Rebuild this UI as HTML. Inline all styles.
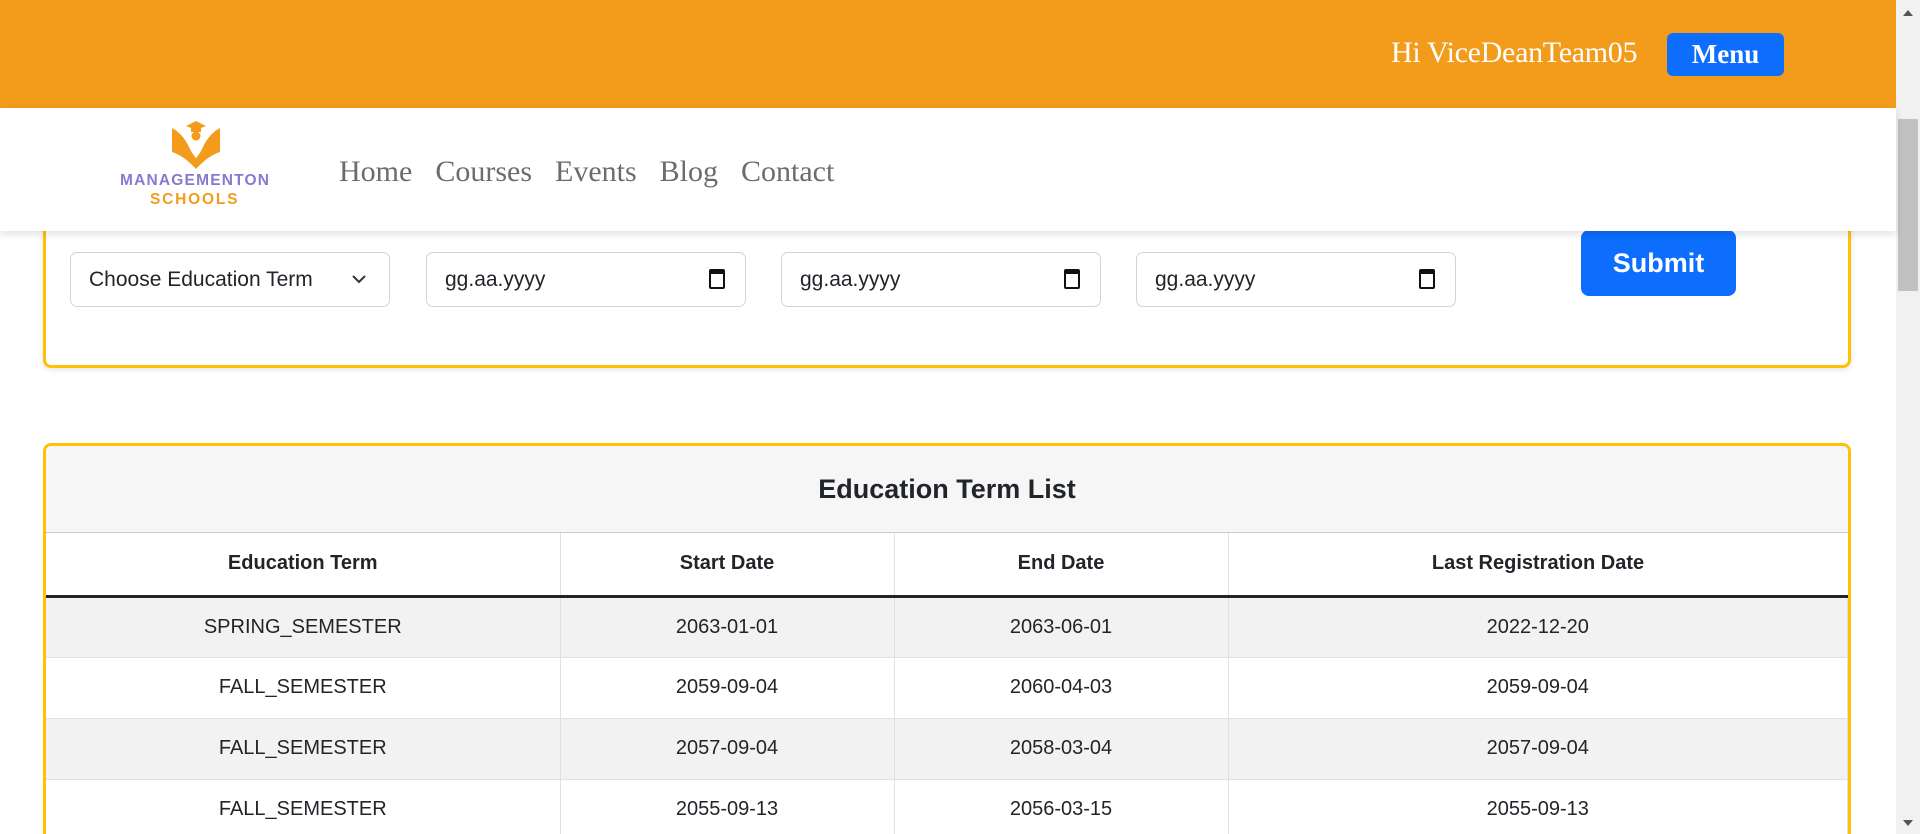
<!DOCTYPE html>
<html><head><meta charset="utf-8"><style>
*{box-sizing:border-box;margin:0;padding:0}
html{width:1920px;height:834px;overflow:hidden}
body{width:1920px;height:834px;overflow:hidden;background:#fff;font-family:"Liberation Sans",sans-serif;position:relative;color:#212529}
.abs{position:absolute}
.top{left:0;top:0;width:1896px;height:108px;background:#f39c1c}
.hi{left:1391px;top:36px;font-family:"Liberation Serif",serif;font-size:30px;color:#fff;letter-spacing:-0.3px}
.menu{left:1667px;top:33px;width:117px;height:43px;background:#0d6efd;border-radius:6px;color:#fff;font-family:"Liberation Serif",serif;font-weight:bold;font-size:27px;text-align:center;line-height:43px}
.nav{left:0;top:108px;width:1896px;height:123px;background:#fff;box-shadow:0 3px 8px rgba(0,0,0,.12);z-index:5}
.links{left:339px;top:47px;font-family:"Liberation Serif",serif;font-size:30px;color:#6c6c6c;white-space:nowrap}
.links span{margin-right:23px}
.card1{left:43px;top:150px;width:1808px;height:218px;border:3px solid #ffc107;border-radius:8px;box-shadow:0 2px 6px rgba(0,0,0,.1)}
.inp{height:55px;border:1px solid #ced4da;border-radius:7px;background:#fff;font-size:21px;line-height:53px;padding-left:18px;color:#212529}
.cal{position:absolute;right:20px;top:16px;width:16px;height:20px;border:2.5px solid #111;border-top-width:5px;border-radius:2px}
.lbl{font-size:21px;color:#212529}
.submit{left:1581px;top:230px;width:155px;height:66px;background:#0d6efd;border-radius:8px;color:#fff;font-weight:bold;font-size:27px;text-align:center;line-height:66px}
.card2{left:43px;top:443px;width:1808px;height:391px;border:3px solid #ffc107;border-bottom:none;border-radius:8px 8px 0 0;overflow:hidden}
.th{position:absolute;left:0;top:0;width:100%;height:87px;background:#f6f6f6;border-bottom:1px solid #ccc;text-align:center;font-weight:bold;font-size:27px;line-height:87px}
table{position:absolute;left:0;top:87px;width:1802px;border-collapse:collapse;font-size:20px}
td,th{text-align:center;border-right:1px solid #dee2e6;border-bottom:1px solid #dee2e6;height:61px}
th{height:63px;font-weight:bold;border-bottom:3px solid #212529}
tr.g td{background:#f2f2f2}
.sb{left:1896px;top:0;width:24px;height:834px;background:#f1f1f1}
.thumb{left:1898px;top:119px;width:20px;height:172px;background:#c1c1c1}
</style></head><body>
<div class="abs top"></div>
<div class="abs hi">Hi ViceDeanTeam05</div>
<div class="abs menu">Menu</div>

<div class="abs card1"></div>
<div class="abs lbl" style="left:426px;top:204px">Start Date</div>
<div class="abs lbl" style="left:781px;top:204px">End Date</div>
<div class="abs lbl" style="left:1136px;top:204px">Last Registration Date</div>
<div class="abs inp" style="left:70px;top:252px;width:320px">Choose Education Term<svg style="position:absolute;right:22px;top:20px" width="16" height="12" viewBox="0 0 16 12"><path d="M2 3l6 6 6-6" fill="none" stroke="#333" stroke-width="2"/></svg></div>
<div class="abs inp" style="left:426px;top:252px;width:320px">gg.aa.yyyy<div class="cal"></div></div>
<div class="abs inp" style="left:781px;top:252px;width:320px">gg.aa.yyyy<div class="cal"></div></div>
<div class="abs inp" style="left:1136px;top:252px;width:320px">gg.aa.yyyy<div class="cal"></div></div>
<div class="abs submit">Submit</div>

<div class="abs nav">
 <svg class="abs" style="left:170px;top:12px" width="52" height="50" viewBox="0 0 52 50">
  <path d="M16 6l10-5 10 5-10 4z" fill="#f39c1c"/><rect x="21" y="7" width="10" height="5" fill="#f39c1c"/><circle cx="26" cy="16" r="4.5" fill="#f39c1c"/>
  <path d="M2 8c6 3 12 9 16 17 3 6 5 10 8 13 3-3 5-7 8-13 4-8 10-14 16-17v24c-6 2-14 6-24 17C16 38 8 34 2 32z" fill="#f39c1c"/>
  <path d="M11 13c5 5 10 13 15 22 5-9 10-17 15-22" fill="none" stroke="#fff" stroke-width="2.5"/>
 </svg>
 <div class="abs" style="left:120px;top:64px;font-size:15.5px;font-weight:bold;color:#8a78d0;letter-spacing:1.2px">MANAGEMENTON</div>
 <div class="abs" style="left:150px;top:83px;font-size:15.5px;font-weight:bold;color:#f39c1c;letter-spacing:1.8px">SCHOOLS</div>
 <div class="abs links"><span>Home</span><span>Courses</span><span>Events</span><span>Blog</span><span>Contact</span></div>
</div>

<div class="abs card2">
 <div class="th">Education Term List</div>
 <table>
  <tr><th style="width:514px">Education Term</th><th style="width:334px">Start Date</th><th style="width:334px">End Date</th><th style="border-right:none">Last Registration Date</th></tr>
  <tr class="g"><td>SPRING_SEMESTER</td><td>2063-01-01</td><td>2063-06-01</td><td>2022-12-20</td></tr>
  <tr><td>FALL_SEMESTER</td><td>2059-09-04</td><td>2060-04-03</td><td>2059-09-04</td></tr>
  <tr class="g"><td>FALL_SEMESTER</td><td>2057-09-04</td><td>2058-03-04</td><td>2057-09-04</td></tr>
  <tr><td>FALL_SEMESTER</td><td>2055-09-13</td><td>2056-03-15</td><td>2055-09-13</td></tr>
 </table>
</div>

<div class="abs sb"></div>
<div class="abs thumb"></div>
<svg class="abs" style="left:1901px;top:8px" width="14" height="10"><path d="M2 8l5-6 5 6z" fill="#555"/></svg>
<svg class="abs" style="left:1901px;top:818px" width="14" height="10"><path d="M2 2l5 6 5-6z" fill="#555"/></svg>
</body></html>
